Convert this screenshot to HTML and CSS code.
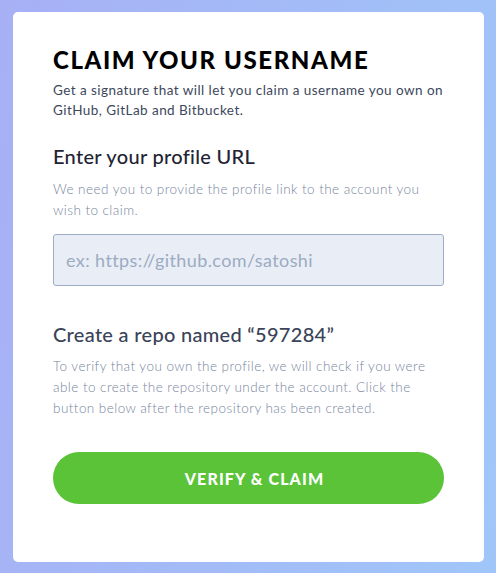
FILE: index.html
```html
<!DOCTYPE html>
<html>
<head>
<meta charset="utf-8">
<link rel="stylesheet" href="styles.css">
</head>
<body>
<div class="card">
  <h1 class="title">CLAIM YOUR USERNAME</h1>
  <p class="lead">Get a signature that will let you claim a username you own on GitHub, GitLab and Bitbucket.</p>
  <h2 class="heading">Enter your profile URL</h2>
  <p class="hint">We need you to provide the profile link to the account you wish to claim.</p>
  <input class="field" type="text" placeholder="ex: https://github.com/satoshi">
  <h2 class="heading heading-muted">Create a repo named “597284”</h2>
  <p class="hint">To verify that you own the profile, we will check if you were able to create the repository under the account. Click the button below after the repository has been created.</p>
  <button class="btn">VERIFY &amp; CLAIM</button>
</div>
</body>
</html>
```

FILE: styles.css
```css
* { box-sizing: border-box; }
html, body { margin: 0; height: 100%; }
body {
  padding: 12px 12px 11px 13px;
  background: linear-gradient(100deg, #a7b0f5 0%, #a2bdf7 60%, #a0c6f9 100%);
  font-family: Lato, "Liberation Sans", sans-serif;
}
.card {
  background: #fff;
  border-radius: 5px;
  height: 550px;
  width: 471px;
  padding: 34px 40px 0 40px;
  display: flex;
  flex-direction: column;
}
.title {
  margin: 0;
  font-size: 24px;
  line-height: 28px;
  font-weight: 900;
  letter-spacing: 1.6px;
  color: #000;
}
.lead {
  margin: 6px 0 0;
  font-size: 13.5px;
  line-height: 20px;
  letter-spacing: 0.45px;
  color: #3d475c;
}
.heading {
  margin: 24px 0 0;
  font-size: 20px;
  line-height: 24px;
  font-weight: 500;
  letter-spacing: 0.3px;
  color: #1f2433;
}
.heading-muted { color: #3a4357; margin-top: 36px; }
.hint {
  margin: 11px 0 0;
  font-size: 13.5px;
  line-height: 21px;
  font-weight: 300;
  letter-spacing: 0.45px;
  color: #77859e;
}
.field {
  margin-top: 13px;
  height: 52px;
  width: 100%;
  border: 1px solid #9eadc6;
  border-radius: 3px;
  background: #e9eef6;
  padding: 0 12px;
  font-family: Lato, "Liberation Sans", sans-serif;
  font-size: 18px;
  letter-spacing: 0.4px;
  color: #333;
}
.field::placeholder { color: #9cabc2; }
.heading-muted + .hint { margin-top: 10px; }
.btn {
  margin-top: 33px;
  height: 52px;
  width: 100%;
  border: none;
  border-radius: 26px;
  background: #5ac337;
  color: #fff;
  padding: 0 0 0 12px;
  font-family: Lato, "Liberation Sans", sans-serif;
  font-size: 16px;
  font-weight: 900;
  letter-spacing: 1.1px;
}
```
